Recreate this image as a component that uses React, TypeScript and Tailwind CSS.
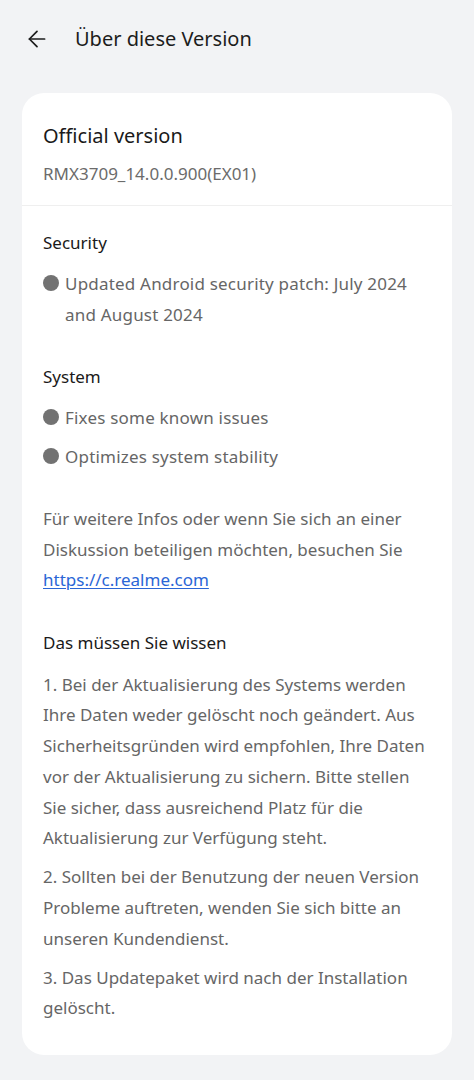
import { ArrowLeft } from "lucide-react";

const font = { fontFamily: '"Noto Sans", "Liberation Sans", sans-serif' };

function Bullet({ children }: { children: React.ReactNode }) {
  return (
    <p className="flex items-start">
      <span className="mt-[7px] mr-[6px] h-4 w-4 flex-shrink-0 rounded-full bg-[#727272]" />
      <span>{children}</span>
    </p>
  );
}

export default function App() {
  return (
    <div className="min-h-[1080px] bg-[#f2f3f5] pb-6" style={font}>
      {/* header */}
      <div className="flex h-[78px] items-center pl-[24px]">
        <ArrowLeft className="h-[26px] w-[26px] text-[#1c1c1c]" strokeWidth={1.6} />
        <h1 className="ml-[25px] text-[20px] text-[#1c1c1c]">Über diese Version</h1>
      </div>

      <div className="mx-[22px] mt-[15px] rounded-[22px] bg-white pb-[31px]">
        <div className="border-b border-[#efefef] px-[21px] pt-[20px] pb-[16px]">
          <h2 className="text-[20px] leading-[46px] text-[#1a1a1a]">Official version</h2>
          <p className="text-[17px] leading-[30px] text-[#6b6b6b]">RMX3709_14.0.0.900(EX01)</p>
        </div>

        <div className="px-[21px] text-[17px] text-[#666666]">
          <h3 className="mt-[22px] leading-[30px] text-[#1a1a1a]">Security</h3>
          <div className="mt-[10px] leading-[31px] tracking-[0.2px]">
            <Bullet>Updated Android security patch: July 2024 and August 2024</Bullet>
          </div>

          <h3 className="mt-[32px] leading-[30px] text-[#1a1a1a]">System</h3>
          <div className="mt-[10px] flex flex-col gap-[8px] leading-[31px] tracking-[0.2px]">
            <Bullet>Fixes some known issues</Bullet>
            <Bullet>Optimizes system stability</Bullet>
          </div>

          <p className="mt-[32px] leading-[30.5px]">
            Für weitere Infos oder wenn Sie sich an einer Diskussion beteiligen möchten, besuchen Sie{" "}
            <a href="#" className="text-[#2b66d6] underline underline-offset-2">https://c.realme.com</a>
          </p>

          <h3 className="mt-[32px] leading-[30px] text-[#1a1a1a]">Das müssen Sie wissen</h3>
          <div className="mt-[12px] flex flex-col gap-[8px] leading-[30.8px]">
            <p>
              1. Bei der Aktualisierung des Systems werden Ihre Daten weder gelöscht noch geändert. Aus
              Sicherheitsgründen wird empfohlen, Ihre Daten vor der Aktualisierung zu sichern. Bitte stellen
              Sie sicher, dass ausreichend Platz für die Aktualisierung zur Verfügung steht.
            </p>
            <p>
              2. Sollten bei der Benutzung der neuen Version Probleme auftreten, wenden Sie sich bitte an
              unseren Kundendienst.
            </p>
            <p>3. Das Updatepaket wird nach der Installation gelöscht.</p>
          </div>
        </div>
      </div>
    </div>
  );
}
